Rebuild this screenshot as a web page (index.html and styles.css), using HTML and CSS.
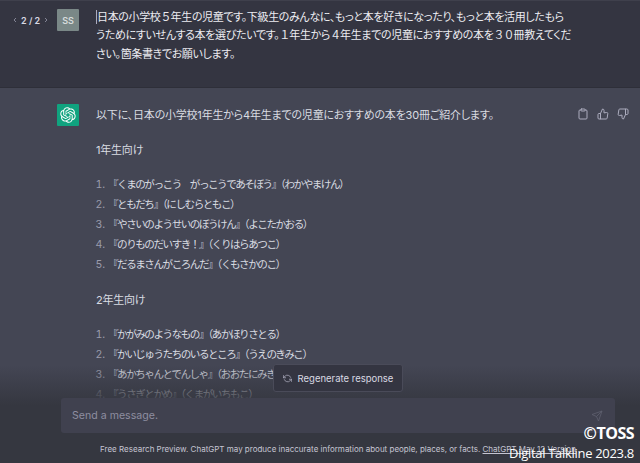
FILE: index.html
```html
<!DOCTYPE html>
<html lang="ja">
<head>
  <meta charset="UTF-8" />
  <meta name="viewport" content="width=device-width, initial-scale=1.0" />
  <title>ChatGPT</title>
  <link rel="stylesheet" href="styles.css">
</head>
<body>
  <div class="page">
    <main class="thread">
      <section class="row row-user">
        <div class="pager">
          <svg class="chev" viewBox="0 0 24 24"><polyline points="15 18 9 12 15 6"/></svg>
          <span>2 / 2</span>
          <svg class="chev" viewBox="0 0 24 24"><polyline points="9 18 15 12 9 6"/></svg>
        </div>
        <div class="avatar avatar-user">SS</div>
        <div class="prompt"><span class="caret"></span>日本の小学校<span class="num">５</span>年生の児童です。下級生のみんなに、もっと本を好きになったり、もっと本を活用したもら<br>うためにすいせんする本を選びたいです。<span class="num">１</span>年生から<span class="num">４</span>年生までの児童におすすめの本を<span class="num">３０</span>冊教えてくだ<br>さい。箇条書きでお願いします。</div>
      </section>

      <section class="row row-bot">
        <div class="avatar avatar-bot">
          <svg viewBox="0 0 41 41"><path fill="currentColor" d="M37.5324 16.8707C37.9808 15.5241 38.1363 14.0974 37.9886 12.6859C37.8409 11.2744 37.3934 9.91076 36.676 8.68622C35.6126 6.83404 33.9882 5.3676 32.0373 4.4985C30.0864 3.62941 27.9098 3.40259 25.8215 3.85078C24.8796 2.7893 23.7219 1.94125 22.4257 1.36341C21.1295 0.785575 19.7249 0.491269 18.3058 0.500197C16.1708 0.495044 14.0893 1.16803 12.3614 2.42214C10.6335 3.67624 9.34853 5.44666 8.6917 7.47815C7.30085 7.76286 5.98686 8.3414 4.8377 9.17505C3.68854 10.0087 2.73073 11.0782 2.02839 12.312C0.956464 14.1591 0.498905 16.2988 0.721698 18.4228C0.944492 20.5467 1.83612 22.5449 3.268 24.1293C2.81966 25.4759 2.66413 26.9026 2.81182 28.3141C2.95951 29.7256 3.40701 31.0892 4.12437 32.3138C5.18791 34.1659 6.8123 35.6322 8.76321 36.5013C10.7141 37.3704 12.8907 37.5973 14.9789 37.1492C15.9208 38.2107 17.0786 39.0587 18.3747 39.6366C19.6709 40.2144 21.0755 40.5087 22.4946 40.4998C24.6307 40.5054 26.7133 39.8321 28.4418 38.5772C30.1704 37.3223 31.4556 35.5506 32.1119 33.5179C33.5027 33.2332 34.8167 32.6547 35.9659 31.821C37.115 30.9874 38.0728 29.9178 38.7752 28.684C39.8458 26.8371 40.3023 24.6979 40.0789 22.5748C39.8556 20.4517 38.9639 18.4544 37.5324 16.8707ZM22.4978 37.8849C20.7443 37.8874 19.0459 37.2733 17.6994 36.1501C17.7601 36.117 17.8666 36.0586 17.936 36.0161L25.9004 31.4156C26.1003 31.3019 26.2663 31.137 26.3813 30.9378C26.4964 30.7386 26.5563 30.5124 26.5549 30.2825V19.0542L29.9213 20.998C29.9389 21.0068 29.9541 21.0198 29.9656 21.0359C29.977 21.052 29.9842 21.0707 29.9867 21.0902V30.3889C29.9842 32.375 29.1946 34.2791 27.7909 35.6841C26.3872 37.0892 24.4838 37.8806 22.4978 37.8849ZM6.39227 31.0064C5.51397 29.4888 5.19742 27.7107 5.49804 25.9832C5.55718 26.0187 5.66048 26.0818 5.73461 26.1244L13.699 30.7248C13.8975 30.8408 14.1233 30.902 14.3532 30.902C14.583 30.902 14.8088 30.8408 15.0073 30.7248L24.731 25.1103V28.9979C24.7321 29.0177 24.7283 29.0376 24.7199 29.0556C24.7115 29.0736 24.6988 29.0893 24.6829 29.1012L16.6317 33.7497C14.9096 34.7416 12.8643 35.0097 10.9447 34.4954C9.02506 33.9811 7.38785 32.7263 6.39227 31.0064ZM4.29707 13.6194C5.17156 12.0998 6.55279 10.9364 8.19885 10.3327C8.19885 10.4013 8.19491 10.5228 8.19491 10.6071V19.808C8.19351 20.0378 8.25334 20.2638 8.36823 20.4629C8.48312 20.6619 8.64893 20.8267 8.84863 20.9404L18.5723 26.5542L15.206 28.4979C15.1894 28.5089 15.1703 28.5155 15.1505 28.5173C15.1307 28.5191 15.1107 28.516 15.0924 28.5082L7.04046 23.8557C5.32135 22.8601 4.06716 21.2235 3.55289 19.3046C3.03862 17.3858 3.30624 15.3413 4.29707 13.6194ZM31.955 20.0556L22.2312 14.4411L25.5976 12.4981C25.6142 12.4872 25.6333 12.4805 25.6531 12.4787C25.6729 12.4769 25.6928 12.4801 25.7111 12.4879L33.7631 17.1364C34.9967 17.849 36.0017 18.8982 36.6606 20.1613C37.3194 21.4244 37.6047 22.849 37.4832 24.2684C37.3617 25.6878 36.8382 27.0432 35.9743 28.1759C35.1103 29.3086 33.9415 30.1717 32.6047 30.6641C32.6047 30.5947 32.6047 30.4733 32.6047 30.3889V21.188C32.6066 20.9586 32.5474 20.7328 32.4332 20.5338C32.319 20.3348 32.154 20.1698 31.955 20.0556ZM35.3055 15.0128C35.2464 14.9765 35.1431 14.9142 35.069 14.8717L27.1045 10.2712C26.906 10.1554 26.6803 10.0943 26.4504 10.0943C26.2206 10.0943 25.9948 10.1554 25.7963 10.2712L16.0726 15.8858V11.9982C16.0715 11.9783 16.0753 11.9585 16.0837 11.9405C16.0921 11.9225 16.1048 11.9068 16.1207 11.8949L24.1719 7.25025C25.4053 6.53903 26.8158 6.19376 28.2383 6.25482C29.6608 6.31589 31.0364 6.78077 32.2044 7.59508C33.3723 8.40939 34.2842 9.53945 34.8334 10.8531C35.3826 12.1667 35.5464 13.6095 35.3055 15.0128ZM14.2424 21.9419L10.8752 19.9981C10.8576 19.9893 10.8423 19.9763 10.8309 19.9602C10.8195 19.9441 10.8122 19.9254 10.8098 19.9058V10.6071C10.8107 9.18295 11.2173 7.78848 11.9819 6.58696C12.7466 5.38544 13.8377 4.42659 15.1275 3.82264C16.4173 3.21869 17.8524 2.99464 19.2649 3.1767C20.6775 3.35876 22.0089 3.93941 23.1034 4.85067C23.0427 4.88379 22.937 4.94215 22.8668 4.98473L14.9024 9.58517C14.7025 9.69878 14.5366 9.86356 14.4215 10.0626C14.3065 10.2616 14.2466 10.4877 14.2479 10.7175L14.2424 21.9419ZM16.071 17.9991L20.4018 15.4978L24.7325 17.9975V22.9985L20.4018 25.4983L16.071 22.9985V17.9991Z"/></svg>
        </div>
        <div class="answer">
          <p>以下に、日本の小学校1年生から4年生までの児童におすすめの本を30冊ご紹介します。</p>
          <p>1年生向け</p>
          <ol>
            <li>『くまのがっこう　がっこうであそぼう』（わかやまけん）</li>
            <li>『ともだち』（にしむらともこ）</li>
            <li>『やさいのようせいのぼうけん』（よこたかおる）</li>
            <li>『のりものだいすき！』（くりはらあつこ）</li>
            <li>『だるまさんがころんだ』（くもさかのこ）</li>
          </ol>
          <p>2年生向け</p>
          <ol>
            <li>『かがみのようなもの』（あかほりさとる）</li>
            <li>『かいじゅうたちのいるところ』（うえのきみこ）</li>
            <li>『あかちゃんとでんしゃ』（おおたにみき）</li>
            <li>『うさぎとかめ』（くまがいちもこ）</li>
          </ol>
        </div>
        <div class="actions">
          <svg viewBox="0 0 24 24"><path d="M16 4h2a2 2 0 0 1 2 2v14a2 2 0 0 1-2 2H6a2 2 0 0 1-2-2V6a2 2 0 0 1 2-2h2"/><rect x="8" y="2" width="8" height="4" rx="1"/></svg>
          <svg viewBox="0 0 24 24"><path d="M14 9V5a3 3 0 0 0-3-3l-4 9v11h11.28a2 2 0 0 0 2-1.7l1.38-9a2 2 0 0 0-2-2.3zM7 22H4a2 2 0 0 1-2-2v-7a2 2 0 0 1 2-2h3"/></svg>
          <svg viewBox="0 0 24 24"><path d="M10 15v4a3 3 0 0 0 3 3l4-9V2H5.72a2 2 0 0 0-2 1.7l-1.38 9a2 2 0 0 0 2 2.3zm7-13h2.67A2.31 2.31 0 0 1 22 4v7a2.31 2.31 0 0 1-2.33 2H17"/></svg>
        </div>
      </section>
    </main>

    <div class="composer">
      <button class="regen" type="button">
        <svg viewBox="0 0 24 24"><polyline points="1 4 1 10 7 10"/><polyline points="23 20 23 14 17 14"/><path d="M20.49 9A9 9 0 0 0 5.64 5.64L1 10m22 4l-4.64 4.36A9 9 0 0 1 3.51 15"/></svg>
        Regenerate response
      </button>
      <div class="input-box">
        <span class="placeholder">Send a message.</span>
        <svg class="send" viewBox="0 0 24 24"><path d="M22 2 11 13M22 2 15 22 11 13 2 9 22 2Z"/></svg>
      </div>
      <div class="note">Free Research Preview. ChatGPT may produce inaccurate information about people, places, or facts. <u>ChatGPT May 12 Version</u></div>
    </div>

    <div class="watermark">
      <div class="wm-top">©TOSS</div>
      <div class="wm-sub">Digital Talkline 2023.8</div>
    </div>
  </div>
</body>
</html>
```

FILE: styles.css
```css
body {
  margin: 0;
  font-family: Inter, 'Noto Sans CJK JP', sans-serif;
  background: #343541;
  overflow: hidden;
}
.page {
  position: relative;
  height: 100vh;
  overflow: hidden;
}
.row {
  display: flex;
}
.row-user {
  background: #343541;
  height: 88px;
  box-sizing: border-box;
  padding: 7px 0 0 11px;
  border-top: 1px solid #3f404c;
  border-bottom: 1px solid #2e2f39;
}
.row-bot {
  background: #444654;
  padding: 16px 0 0 57px;
  height: 375px;
  box-sizing: border-box;
}
.pager {
  display: flex;
  align-items: center;
  gap: 2px;
  width: 46px;
  height: 24px;
  font-size: 9px;
  font-weight: 600;
  color: #d9d9e3;
  white-space: nowrap;
}
.chev {
  width: 8px;
  height: 8px;
  fill: none;
  stroke: #acacbe;
  stroke-width: 2;
}
.avatar {
  width: 22px;
  height: 22px;
  flex: none;
  border-radius: 1px;
  display: flex;
  align-items: center;
  justify-content: center;
}
.avatar-user {
  margin-top: 1px;
  background: #7a8887;
  color: #d7dcdc;
  font-size: 9px;
  font-weight: 600;
}
.avatar-bot {
  background: #10a37f;
  color: #fff;
}
.avatar-bot svg {
  width: 16px;
  height: 16px;
}
.prompt {
  width: 472px;
  margin-left: 17px;
  font-size: 11px;
  font-feature-settings: "palt";
  letter-spacing: -0.35px;
  line-height: 18.4px;
  color: #ececf1;
  white-space: nowrap;
}
.num {
  font-feature-settings: normal;
  letter-spacing: -1px;
}
.caret {
  display: inline-block;
  width: 1px;
  height: 14px;
  background: #acacbe;
  vertical-align: -3px;
}
.answer {
  width: 472px;
  margin-left: 17px;
  padding-top: 1px;
  font-size: 11px;
  font-feature-settings: "palt";
  letter-spacing: -0.2px;
  line-height: 20px;
  color: #d9dce2;
}
.answer p {
  margin: 0 0 15px;
}
.answer ol {
  margin: 0 0 15px;
  padding-left: 12px;
  font-size: 10.6px;
  font-feature-settings: normal;
  letter-spacing: -1.5px;
}
.answer li::marker {
  color: #9a9bab;
  letter-spacing: 0;
}
.actions {
  display: flex;
  gap: 8px;
  margin-left: 9px;
  padding-top: 4px;
}
.actions svg {
  width: 12px;
  height: 12px;
  fill: none;
  stroke: #acacbe;
  stroke-width: 2;
  stroke-linecap: round;
  stroke-linejoin: round;
}
.composer {
  position: absolute;
  left: 0;
  right: 0;
  bottom: 0;
  height: 115px;
  box-sizing: border-box;
  padding: 16px 0 0 36px;
  display: flex;
  flex-direction: column;
  align-items: center;
  background: linear-gradient(180deg, rgba(53, 55, 64, 0) 15%, #353740 50%);
}
.regen {
  display: flex;
  align-items: center;
  gap: 6px;
  height: 28px;
  padding: 0 9px;
  box-sizing: border-box;
  background: #343541;
  border: 1px solid #4a4b59;
  border-radius: 3px;
  color: #d9d9e3;
  font-family: inherit;
  font-size: 9.5px;
}
.regen svg {
  width: 9px;
  height: 9px;
  fill: none;
  stroke: #acacbe;
  stroke-width: 2;
  stroke-linecap: round;
  stroke-linejoin: round;
}
.input-box {
  width: 554px;
  height: 35px;
  margin-top: 6px;
  box-sizing: border-box;
  padding: 0 12px 0 11px;
  display: flex;
  align-items: center;
  justify-content: space-between;
  background: #40414f;
  border-radius: 3px;
}
.placeholder {
  font-size: 10.6px;
  color: #8e8ea0;
}
.send {
  width: 12px;
  height: 12px;
  fill: none;
  stroke: #5e5f6e;
  stroke-width: 1.6;
  stroke-linejoin: round;
}
.note {
  margin-top: 10px;
  font-size: 8px;
  line-height: 12px;
  color: #c5c5d2;
  white-space: nowrap;
}
.watermark {
  position: absolute;
  right: 6px;
  bottom: 1px;
  text-align: right;
  color: #fff;
  font-family: 'Open Sans', sans-serif;
}
.wm-top {
  font-size: 16px;
  font-weight: 700;
  letter-spacing: -0.5px;
  line-height: 22px;
}
.wm-sub {
  font-size: 13px;
  letter-spacing: -0.3px;
  line-height: 18px;
}
```
